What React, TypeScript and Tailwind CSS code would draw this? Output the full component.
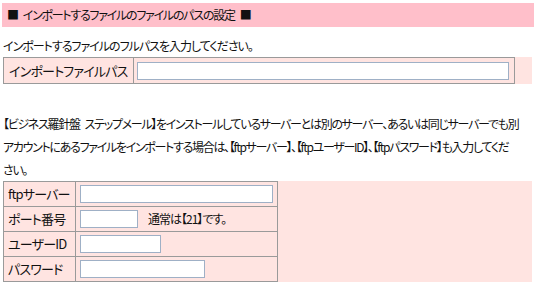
import React from 'react';

const jp = "font-['Noto_Sans_CJK_JP',sans-serif] [font-feature-settings:'palt']";

const Field: React.FC<{ w: string }> = ({ w }) => (
    <input type="text" className={`${w} h-[18px] bg-white border border-[#9fb0c6] outline-none`} />
);

const App: React.FC = () => {
    return (
        <div className={`w-[536px] h-[284px] bg-white text-[#111] ${jp}`}>
            <div className="h-[3px]" />
            <div className="mx-[2px] h-[24px] bg-[#ffbfca] flex items-center pl-[5px] text-[12px] tracking-[-1.25px] whitespace-nowrap">
                <span>■</span>
                <span className="ml-[5px]">インポートするファイルのファイルのパスの設定</span>
                <span className="ml-[5px]">■</span>
            </div>

            <p className="mt-[7px] pl-[3px] text-[12px] leading-[23px] tracking-[-1px]">
                インポートするファイルのフルパスを入力してください。
            </p>

            {/* import path */}
            <div className="ml-[3px] w-[529px] bg-[#ffe4e1]">
                <table className="w-[512px] border-collapse text-[13px] tracking-[-0.8px]">
                    <tbody>
                        <tr className="h-[26px]">
                            <td className="w-[130px] border border-[#9a9a9a] pl-[5px] whitespace-nowrap">インポートファイルパス</td>
                            <td className="border border-[#9a9a9a] px-[3px]">
                                <Field w="w-[372px]" />
                            </td>
                        </tr>
                    </tbody>
                </table>
            </div>

            <p className="mt-[28px] pl-[3px] text-[12px] leading-[23px] tracking-[-1.3px] whitespace-nowrap">
                【ビジネス羅針盤<span className="inline-block w-[5px]" />ステップメール】をインストールしているサーバーとは別のサーバー、あるいは同じサーバーでも別<br />
                アカウントにあるファイルをインポートする場合は、【ftpサーバー】、【ftpユーザーID】、【ftpパスワード】も入力してくだ<br />
                さい。
            </p>

            {/* ftp settings */}
            <div className="ml-[3px] w-[529px] bg-[#ffe4e1]">
                <table className="w-[275px] border-collapse text-[13px] tracking-[-0.8px]">
                    <tbody>
                        <tr className="h-[25px]">
                            <td className="w-[72px] border border-[#9a9a9a] pl-[4px] whitespace-nowrap">ftpサーバー</td>
                            <td className="border border-[#9a9a9a] px-[4px]"><Field w="w-[193px]" /></td>
                        </tr>
                        <tr className="h-[25px]">
                            <td className="border border-[#9a9a9a] pl-[4px] whitespace-nowrap">ポート番号</td>
                            <td className="border border-[#9a9a9a] px-[4px] whitespace-nowrap">
                                <div className="flex items-center gap-[10px]">
                                    <Field w="w-[58px]" />
                                    <span className="text-[12px] tracking-[-1px]">通常は【21】です。</span>
                                </div>
                            </td>
                        </tr>
                        <tr className="h-[25px]">
                            <td className="border border-[#9a9a9a] pl-[4px] whitespace-nowrap">ユーザーID</td>
                            <td className="border border-[#9a9a9a] px-[4px]"><Field w="w-[81px]" /></td>
                        </tr>
                        <tr className="h-[25px]">
                            <td className="border border-[#9a9a9a] pl-[4px] whitespace-nowrap">パスワード</td>
                            <td className="border border-[#9a9a9a] px-[4px]"><Field w="w-[125px]" /></td>
                        </tr>
                    </tbody>
                </table>
            </div>
        </div>
    );
};

export default App;
